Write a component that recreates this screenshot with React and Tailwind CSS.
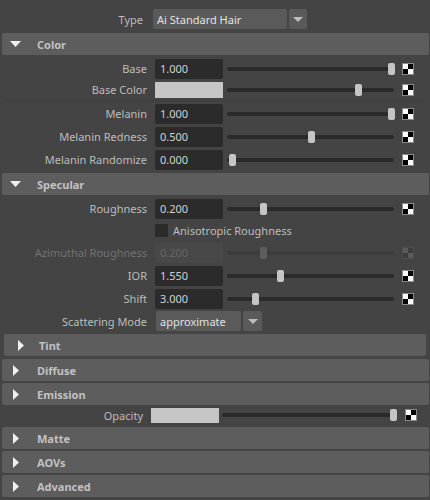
import React from 'react';

const Checker = ({ disabled }) => (
  <div
    className={`w-[12px] h-[12px] border grid grid-cols-2 grid-rows-2 ${
      disabled ? 'border-[#4e4e4e]' : 'border-[#8a8a8a]'
    }`}
  >
    <div className={disabled ? 'bg-[#5a5a5a]' : 'bg-white'} />
    <div className={disabled ? 'bg-[#3e3e3e]' : 'bg-black'} />
    <div className={disabled ? 'bg-[#3e3e3e]' : 'bg-black'} />
    <div className={disabled ? 'bg-[#5a5a5a]' : 'bg-white'} />
  </div>
);

const Slider = ({ pos, width = 'w-[167px]', disabled }) => (
  <div className={`relative ${width} h-[12px] flex items-center`}>
    <div
      className={`w-full h-[4px] rounded-full ${
        disabled ? 'bg-[#3c3c3c]' : 'bg-[#2a2a2a]'
      }`}
    />
    <div
      className={`absolute top-0 w-[7px] h-[12px] rounded-[2px] ${
        disabled ? 'bg-[#5e5e5e]' : 'bg-[#c5c5c5]'
      }`}
      style={{ left: pos }}
    />
  </div>
);

const NumRow = ({ label, value, pos, disabled, h = 'h-[23px]' }) => (
  <div className={`flex items-center ${h}`}>
    <div
      className={`w-[147px] text-right ${
        disabled ? 'text-[#727272]' : 'text-[#bdbdbd]'
      }`}
    >
      {label}
    </div>
    <div
      className={`ml-[8px] w-[68px] h-[20px] rounded-[2px] flex items-center px-[5px] ${
        disabled ? 'bg-[#484848] text-[#666666]' : 'bg-[#2b2b2b] text-[#d2d2d2]'
      }`}
    >
      {value}
    </div>
    <div className="ml-[4px]">
      <Slider pos={pos} disabled={disabled} />
    </div>
    <div className="ml-[8px]">
      <Checker disabled={disabled} />
    </div>
  </div>
);

const Header = ({ title, open, inset }) => (
  <div
    className={`h-[22px] rounded-[2px] bg-[#5d5d5d] flex items-center font-bold text-[#c2c2c2] ${
      inset ? 'mx-[4px]' : 'ml-[2px] mr-[1px]'
    }`}
  >
    <div className={`${inset ? 'w-[35px] pl-[11px]' : 'w-[35px] pl-[8px]'} flex items-center`}>
      {open ? (
        <svg width="11" height="6" viewBox="0 0 11 6">
          <path d="M0 0h11L5.5 6z" fill="#f0f0f0" />
        </svg>
      ) : (
        <svg width="6" height="11" viewBox="0 0 6 11" className="ml-[3px]">
          <path d="M0 0v11l6-5.5z" fill="#f0f0f0" />
        </svg>
      )}
    </div>
    <span>{title}</span>
  </div>
);

const Dropdown = ({ text, w, aw }) => (
  <div className="flex gap-[2px] h-[20px]">
    <div className={`${w} rounded-[2px] bg-[#5a5a5a] flex items-center px-[4px] text-[#e2e2e2]`}>
      {text}
    </div>
    <div className={`${aw} rounded-[2px] bg-[#5a5a5a] flex items-center justify-center`}>
      <svg width="10" height="5" viewBox="0 0 10 5">
        <path d="M0 0h10L5 5z" fill="#bdbdbd" />
      </svg>
    </div>
  </div>
);

export default function App() {
  return (
    <div
      className="w-[430px] h-[500px] bg-[#444444] text-[11px] leading-none overflow-hidden"
      style={{ fontFamily: '"Noto Sans", "Open Sans", sans-serif' }}
    >
      <div className="flex items-center h-[20px] mt-[9px] mb-[4px]">
        <div className="w-[143px] text-right text-[#bdbdbd]">Type</div>
        <div className="ml-[10px]">
          <Dropdown text="Ai Standard Hair" w="w-[134px]" aw="w-[18px]" />
        </div>
      </div>

      <Header title="Color" open />
      <div className="pt-[2px] pb-[2px]">
        <NumRow label="Base" value="1.000" pos={161} />
        <div className="flex items-center h-[19px]">
          <div className="w-[147px] text-right text-[#bdbdbd]">Base Color</div>
          <div className="ml-[8px] w-[68px] h-[16px] bg-[#c6c6c6]" />
          <div className="ml-[4px]">
            <Slider pos={128} />
          </div>
          <div className="ml-[8px]">
            <Checker />
          </div>
        </div>
        <div className="h-[3px] flex items-center px-[5px]">
          <div className="w-full h-[1px] bg-[#3c3c3c]" />
        </div>
        <NumRow label="Melanin" value="1.000" pos={161} />
        <NumRow label="Melanin Redness" value="0.500" pos={81} />
        <NumRow label="Melanin Randomize" value="0.000" pos={2} />
      </div>

      <Header title="Specular" open />
      <div className="pt-[2px] pb-[3px]">
        <NumRow label="Roughness" value="0.200" pos={33} />
        <div className="flex items-center h-[21px]">
          <div className="ml-[155px] w-[13px] h-[13px] rounded-[1px] bg-[#2b2b2b]" />
          <span className="ml-[5px] text-[#bdbdbd]">Anisotropic Roughness</span>
        </div>
        <NumRow label="Azimuthal Roughness" value="0.200" pos={33} disabled />
        <NumRow label="IOR" value="1.550" pos={50} />
        <NumRow label="Shift" value="3.000" pos={25} />
        <div className="flex items-center h-[22px] mb-[2px]">
          <div className="w-[147px] text-right text-[#bdbdbd]">Scattering Mode</div>
          <div className="ml-[9px]">
            <Dropdown text="approximate" w="w-[85px]" aw="w-[19px]" />
          </div>
        </div>
        <Header title="Tint" inset />
      </div>

      <div className="flex flex-col gap-[2px]">
        <Header title="Diffuse" />
        <div>
          <Header title="Emission" />
          <div className="flex items-center h-[20px]">
            <div className="w-[143px] text-right text-[#bdbdbd]">Opacity</div>
            <div className="ml-[8px] w-[68px] h-[15px] bg-[#c6c6c6]" />
            <div className="ml-[3px]">
              <Slider pos={168} width="w-[175px]" />
            </div>
            <div className="ml-[8px]">
              <Checker />
            </div>
          </div>
        </div>
        <Header title="Matte" />
        <Header title="AOVs" />
        <Header title="Advanced" />
      </div>
    </div>
  );
}
